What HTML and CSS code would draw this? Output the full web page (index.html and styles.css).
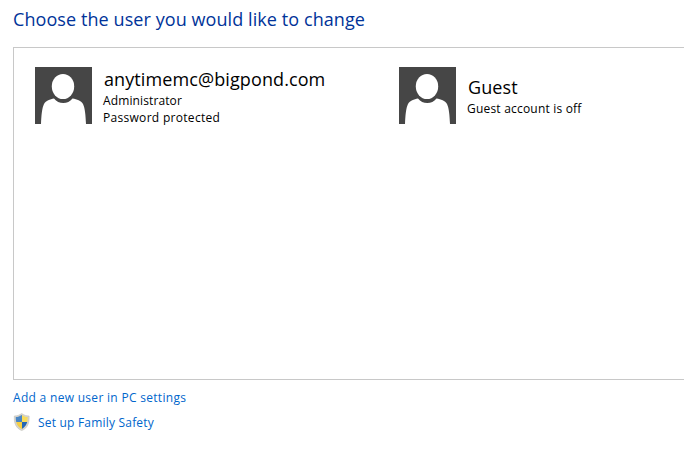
FILE: index.html
```
<!DOCTYPE html>
<html lang="en">
<head>
    <meta charset="UTF-8">
    <meta name="viewport" content="width=device-width, initial-scale=1.0">
    <title>Manage Accounts</title>
    <link rel="stylesheet" href="styles.css">
</head>
<body>
    <svg width="0" height="0" class="symbols">
        <symbol id="avatar" viewBox="0 0 57 57">
            <rect width="57" height="57" fill="#464646"/>
            <ellipse cx="28" cy="19.5" rx="11.2" ry="12.6" fill="#fff"/>
            <path d="M6 57C6.400 48 7 41 9 37C11 33.500 15 32.300 19 31.500C21.500 34.500 24.500 36 28.300 36C32 36 35 34.500 37.500 31.500C42 32.300 46 33.500 48 37C50 41 50.600 48 51 57Z" fill="#fff"/>
        </symbol>
    </svg>

    <h1>Choose the user you would like to change</h1>

    <div class="accounts">
        <a class="account">
            <svg class="avatar"><use href="#avatar"/></svg>
            <div class="details">
                <h2>anytimemc@bigpond.com</h2>
                <p class="role">Administrator</p>
                <p class="protection">Password protected</p>
            </div>
        </a>
        <a class="account">
            <svg class="avatar"><use href="#avatar"/></svg>
            <div class="details">
                <h2>Guest</h2>
                <p class="status">Guest account is off</p>
            </div>
        </a>
    </div>

    <div class="links">
        <a class="link"><span class="add-user">Add a new user in PC settings</span></a>
        <a class="link">
            <svg class="shield" viewBox="0 0 17 18">
                <defs>
                    <clipPath id="shield-clip">
                        <path d="M8.700 2C7 3.300 5 4 2.800 4.100C2.600 9.500 4 13.600 8.700 16C13.400 13.600 14.800 9.500 14.600 4.100C12.400 4 10.400 3.300 8.700 2Z"/>
                    </clipPath>
                </defs>
                <path d="M8.700 .5C6.500 2.200 4 3 1.300 3C1 10 2.600 15 8.700 17.600C14.800 15 16.400 10 16.100 3C13.400 3 10.900 2.200 8.700 .5Z" fill="#d6d4cc" stroke="#c2c2bd" stroke-width=".6"/>
                <g clip-path="url(#shield-clip)">
                    <rect width="9" height="9" fill="#4a86c4"/>
                    <rect x="9" width="8" height="9" fill="#f8dc5c"/>
                    <rect y="9" width="9" height="9" fill="#f5cf45"/>
                    <rect x="9" y="9" width="8" height="9" fill="#2366b5"/>
                </g>
            </svg>
            <span class="family">Set up Family Safety</span>
        </a>
    </div>
</body>
</html>
```
FILE: styles.css
```
body {
    font-family: "Segoe UI", "Open Sans", "Noto Sans", sans-serif;
    font-size: 12px;
    margin: 0;
    padding: 7px 0 0 13px;
    background: #fff;
    color: #000;
}

h1, h2, p {
    margin: 0;
    font-weight: normal;
    white-space: nowrap;
}

h1 {
    color: #003399;
    font-size: 18px;
    line-height: 24px;
    letter-spacing: 0.08px;
}

.symbols {
    display: block;
}

.accounts {
    display: grid;
    grid-template-columns: 364px 1fr;
    align-items: start;
    height: 333px;
    margin-top: 16px;
    padding: 19px 0 0 21px;
    box-sizing: border-box;
    border: 1px solid #c8c8c8;
    border-right: none;
}

.account {
    display: flex;
    height: 57px;
    align-items: center;
}

.avatar {
    width: 57px;
    height: 57px;
    flex: none;
    margin-right: 11px;
}

.details h2 {
    font-size: 18px;
    line-height: 24px;
    padding: 1px 0 1px 1px;
    letter-spacing: 0.1px;
}

.details p {
    line-height: 17px;
}

.role {
    letter-spacing: 0.12px;
}

.protection {
    letter-spacing: 0.3px;
}

.status {
    letter-spacing: 0.2px;
}

.links {
    display: flex;
    flex-direction: column;
    padding-top: 5px;
}

.link {
    display: flex;
    align-items: center;
    height: 25px;
    color: #0066cc;
    white-space: nowrap;
}

.add-user {
    letter-spacing: 0.3px;
}

.family {
    letter-spacing: 0.2px;
}

.shield {
    width: 17px;
    height: 18px;
    margin: 0 8px 2px 0;
}
```
